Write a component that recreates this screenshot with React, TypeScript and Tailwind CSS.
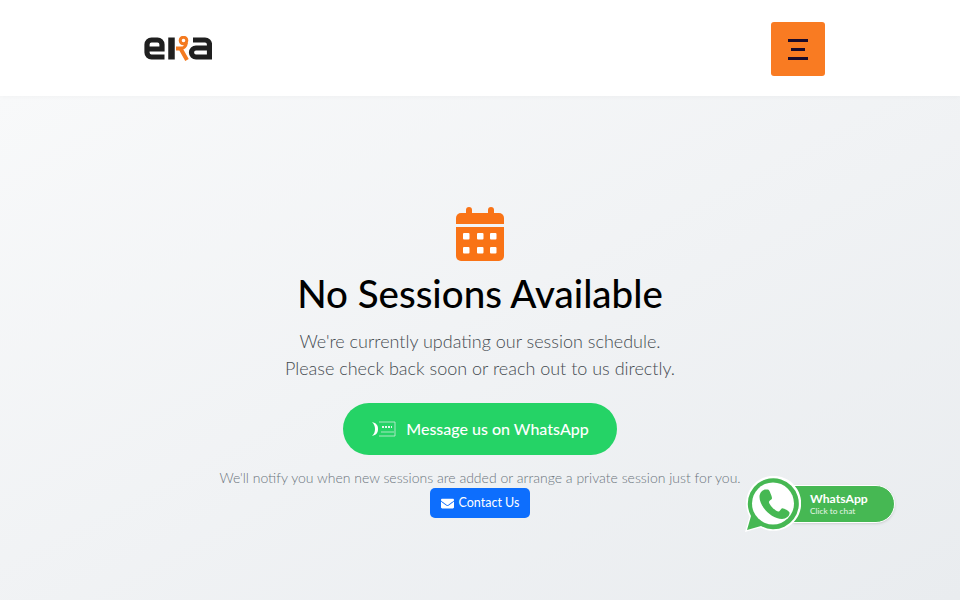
import { FaEnvelope } from "react-icons/fa";

function Logo() {
  return (
    <svg width="69" height="26" viewBox="0 0 69 26" fill="none">
      <path d="M21.500 21H8.500A4.500 4.500 0 0 1 4 16.500V8.500A4.500 4.500 0 0 1 8.500 4H14.500A4.500 4.500 0 0 1 19 8.500V13H4" stroke="#1f1f1f" strokeWidth="5.200" />
      <path d="M28.500 1.500v22" stroke="#1f1f1f" strokeWidth="6.500" />
      <path d="M33 12.500h4.500l6.500 11.500" stroke="#f47a20" strokeWidth="4" />
      <circle cx="40.500" cy="4.500" r="3.300" stroke="#f47a20" strokeWidth="3" />
      <path d="M38 12.500c3-.5 5-2.500 5.500-6" stroke="#f47a20" strokeWidth="3" />
      <path d="M50 4h12a4.500 4.500 0 0 1 4.500 4.500V21H53a4.500 4.500 0 0 1 0-9h11" stroke="#1f1f1f" strokeWidth="5.200" />
    </svg>
  );
}

function CalendarIcon() {
  return (
    <svg width="48" height="54" viewBox="0 0 48 54" fill="#f97316">
      <rect x="10" y="0" width="6" height="10" rx="3" />
      <rect x="32" y="0" width="6" height="10" rx="3" />
      <path d="M0 17V11a5 5 0 0 1 5-5h38a5 5 0 0 1 5 5v6z" />
      <path d="M0 20h48v29a5 5 0 0 1-5 5H5a5 5 0 0 1-5-5z" />
      <g fill="#fff">
        <rect x="7" y="26" width="6.500" height="6.500" rx="1" />
        <rect x="21" y="26" width="6.500" height="6.500" rx="1" />
        <rect x="34" y="26" width="6.500" height="6.500" rx="1" />
        <rect x="7" y="40" width="6.500" height="6.500" rx="1" />
        <rect x="21" y="40" width="6.500" height="6.500" rx="1" />
        <rect x="34" y="40" width="6.500" height="6.500" rx="1" />
      </g>
    </svg>
  );
}

function WaGlyph({ size }: { size: number }) {
  return (
    <svg width={size} height={size} viewBox="0 0 56 56">
      <path d="M0 56l4.500-15.500A27.500 27.500 0 1 1 15.500 51.500z" fill="#fff" />
      <path d="M2 54l4-14A25.500 25.500 0 1 1 16 50z" fill="#46b853" />
      <circle cx="28" cy="27.500" r="21" fill="#fff" />
      <path d="M20.500 13.500c-2.500 0-6 3-6 7.500 0 9 11.500 22 22.500 22 4.500 0 8-3.500 7.500-6.500-.2-1.500-6-4.500-7.300-4.300-1.500.3-2 3.300-3.700 3.300-3 0-9.500-7-9.500-9.300 0-2 3-2.500 3-4 0-1.500-2.500-8-3.500-8.500-.8-.4-2-.2-3-.2z" fill="#46b853" />
    </svg>
  );
}

function BrokenImg() {
  return (
    <svg width="25" height="16" viewBox="0 0 25 16" fill="none">
      <path d="M1 1c4 1 6 3 6 7s-2 6-6 7c2-2 3-4 3-7S3 3 1 1z" fill="#fff" />
      <path d="M8 1h16M8 15h16M24 1v14" stroke="#cfeedd" strokeWidth="0.8" />
      <path d="M11 6h10" stroke="#e7f8ee" strokeWidth="2" strokeDasharray="2 1" />
      <path d="M10 11h13" stroke="#a6e8c0" strokeWidth="1" />
    </svg>
  );
}

export default function App() {
  return (
    <div className="relative h-[600px] w-[960px] overflow-hidden bg-white font-['Lato',sans-serif]">
      <header className="relative z-10 flex h-[96px] items-center justify-between bg-white pl-[143px] pr-[135px] pt-[2px] shadow-[0_1px_5px_rgba(0,0,0,0.03)]">
        <Logo />
        <button className="flex h-[54px] w-[54px] flex-col items-center justify-center gap-[6px] rounded-[3px] bg-[#f97b22]">
          <span className="h-[3px] w-[20px] bg-[#1a0a2a]" />
          <span className="h-[3px] w-[14px] bg-[#1a0a2a]" />
          <span className="h-[3px] w-[20px] bg-[#1a0a2a]" />
        </button>
      </header>
      <main className="flex h-[504px] flex-col items-center bg-gradient-to-br from-[#f8f9fa] to-[#e9ecef] pt-[111px]">
        <CalendarIcon />
        <h1 className="mt-[9px] text-[38.5px] font-medium leading-[46px] text-black">No Sessions Available</h1>
        <p className="mt-[12px] text-center text-[18px] font-light leading-[27px] text-[#454b51]">
          We're currently updating our session schedule.
          <br />
          Please check back soon or reach out to us directly.
        </p>
        <a className="mt-[21px] flex h-[52px] w-[274px] items-center justify-center gap-[10px] rounded-full bg-[#25d366] text-[16px] font-medium text-white">
          <BrokenImg />
          Message us on WhatsApp
        </a>
        <p className="mt-[14px] text-[14px] font-light leading-[18px] text-[#6c757d]">
          We'll notify you when new sessions are added or arrange a private session just for you.
        </p>
        <a className="mt-[1px] flex h-[30px] w-[100px] items-center justify-center gap-[5px] rounded-[5px] bg-[#0d6efd] text-[12.5px] text-white">
          <FaEnvelope className="h-[13px] w-[13px]" />
          Contact Us
        </a>
      </main>
      <div className="absolute left-[745px] top-[476px] flex items-center">
        <div className="relative z-10 rounded-full">
          <WaGlyph size={56} />
        </div>
        <div className="-ml-[8px] -mt-[1px] flex h-[38px] w-[102px] flex-col justify-center rounded-r-full border border-white bg-[#46b853] pl-[16px] text-white shadow-sm">
          <span className="text-[12.200px] font-bold leading-[14px]">WhatsApp</span>
          <span className="text-[8.300px] leading-[10px] text-[#e6f6e8]">Click to chat</span>
        </div>
      </div>
    </div>
  );
}
